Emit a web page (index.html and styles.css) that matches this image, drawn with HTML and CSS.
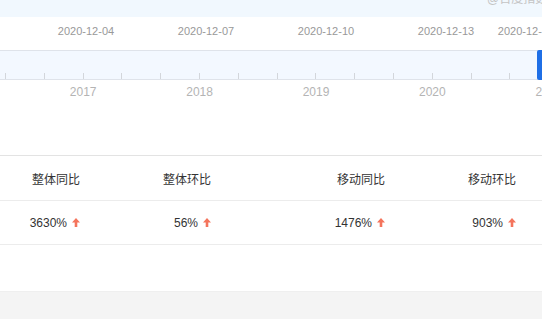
FILE: index.html
```html
<!DOCTYPE html>
<html lang="zh-CN">
<head>
    <meta charset="UTF-8">
    <title>指数概览</title>
    <link rel="stylesheet" href="styles.css">
</head>
<body>
<div class="chart">
    <div class="watermark"><p>@百度指数</p></div>
    <div class="dates">
        <span>2020-12-04</span>
        <span>2020-12-07</span>
        <span>2020-12-10</span>
        <span>2020-12-13</span>
        <span class="last">2020-12-16</span>
    </div>
    <div class="slider">
        <div class="handle"></div>
    </div>
    <div class="years">
        <span>2017</span>
        <span>2018</span>
        <span>2019</span>
        <span>2020</span>
        <span>2021</span>
    </div>
</div>

<div class="table">
    <div class="row head">
        <div class="cell">整体同比</div>
        <div class="cell">整体环比</div>
        <div class="cell">移动同比</div>
        <div class="cell">移动环比</div>
    </div>
    <div class="row">
        <div class="cell">3630%<svg class="up" viewBox="0 0 8 9"><path d="M4 0 L8 4.6 H5.3 V9 H2.7 V4.6 H0 Z"/></svg></div>
        <div class="cell">56%<svg class="up" viewBox="0 0 8 9"><path d="M4 0 L8 4.6 H5.3 V9 H2.7 V4.6 H0 Z"/></svg></div>
        <div class="cell">1476%<svg class="up" viewBox="0 0 8 9"><path d="M4 0 L8 4.6 H5.3 V9 H2.7 V4.6 H0 Z"/></svg></div>
        <div class="cell">903%<svg class="up" viewBox="0 0 8 9"><path d="M4 0 L8 4.6 H5.3 V9 H2.7 V4.6 H0 Z"/></svg></div>
    </div>
</div>

<div class="footer"></div>
</body>
</html>
```

FILE: styles.css
```css
* {
    margin: 0;
    padding: 0;
}

body {
    width: 542px;
    height: 319px;
    overflow: hidden;
    background: #fff;
    font-family: "Liberation Sans", "Noto Sans CJK SC", sans-serif;
}

.chart {
    overflow: hidden;
}

/* 水印只露出下半截 */
.watermark {
    height: 17px;
    background: #f1f8fe;
    padding-left: 487px;
    white-space: nowrap;
    overflow: hidden;
}

.watermark p {
    margin-top: -7px;
    font-size: 12px;
    line-height: 12px;
    color: #c4c4c4;
}

.dates {
    height: 33px;
    display: flex;
    padding-left: 26px;
    white-space: nowrap;
}

.dates span {
    flex: 0 0 120px;
    text-align: center;
    font-size: 11px;
    line-height: 28px;
    color: #999;
}

.dates .last {
    margin-left: -40px;
}

.slider {
    position: relative;
    height: 28px;
    border-top: 1px solid #dfe3ea;
    border-bottom: 1px solid #dfe3ea;
    background-color: #f3f8ff;
    background-image: repeating-linear-gradient(to right, #d3d6db 0, #d3d6db 1px, transparent 1px, transparent 38.8px);
    background-size: 100% 6px;
    background-position: 5px bottom;
    background-repeat: no-repeat;
}

.handle {
    position: absolute;
    top: -1px;
    bottom: -1px;
    right: -4px;
    width: 9px;
    border-radius: 2px;
    background: #1f6fe6;
}

.years {
    height: 24px;
    display: flex;
    padding-left: 25px;
    white-space: nowrap;
}

.years span {
    flex: 0 0 116.4px;
    text-align: center;
    font-size: 12px;
    line-height: 24px;
    color: #b4b4b4;
}

.table {
    margin-top: 51px;
    border-top: 1px solid #e3e3e3;
}

.row {
    display: grid;
    grid-template-columns: 92px 131px 174px 131px;
    height: 43px;
    border-bottom: 1px solid #ececec;
}

.row.head {
    height: 44px;
}

.cell {
    display: flex;
    align-items: center;
    justify-content: flex-end;
    padding-right: 12px;
    font-size: 12px;
    color: #333;
}

.up {
    width: 8px;
    height: 9px;
    margin-left: 5px;
    fill: #f4745c;
}

.footer {
    margin-top: 46px;
    height: 28px;
    border-top: 1px solid #efefef;
    background: #f4f4f4;
}
```
